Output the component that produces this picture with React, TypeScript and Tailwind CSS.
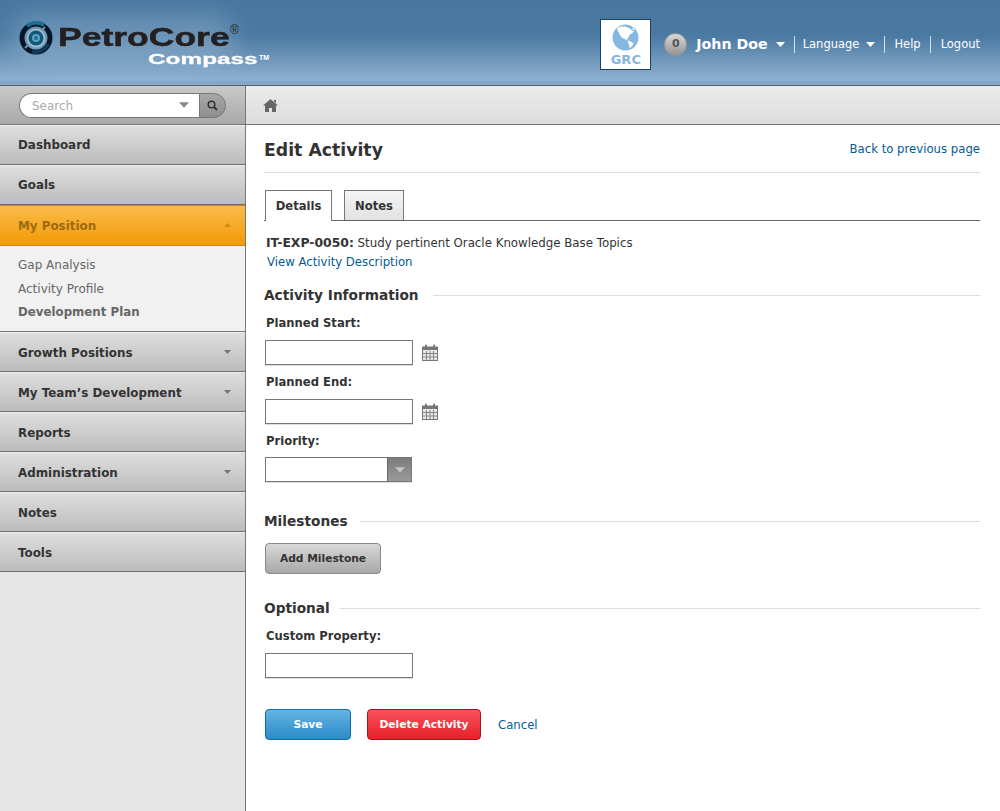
import React from "react";

const font = { fontFamily: '"DejaVu Sans", Verdana, sans-serif' };

const Caret = ({ up = false, className = "" }: { up?: boolean; className?: string }) => (
  <svg width="9" height="5" viewBox="0 0 9 5" className={className}>
    <path d={up ? "M0 5 L4.5 0 L9 5 Z" : "M0 0 L9 0 L4.5 5 Z"} fill="currentColor" />
  </svg>
);

const Logo = () => (
  <div className="relative w-[280px] h-[70px]">
    <div className="absolute left-[10px] top-[14px] w-[225px] h-[50px] rounded-full bg-[#a9c6dd] opacity-35 blur-[12px]" />
    <svg width="34" height="34" viewBox="0 0 34 34" className="absolute left-[19px] top-[21px]">
      <circle cx="17" cy="17" r="14" fill="none" stroke="#07162a" strokeWidth="5" />
      <path d="M8 5 A15 15 0 0 1 25 4" fill="none" stroke="#1c6f92" strokeWidth="4" />
      <path d="M29 23 A15 15 0 0 1 13 31" fill="none" stroke="#123a58" strokeWidth="4" />
      <path d="M26 6 L22 10 M6 27 L10 23" stroke="#6d93ae" strokeWidth="2" />
      <circle cx="17" cy="17" r="9.5" fill="#9fb9cb" />
      <circle cx="17" cy="17" r="7.5" fill="#0f5a7c" />
      <circle cx="17" cy="17" r="4" fill="#5fa3c0" />
      <circle cx="17" cy="17" r="2" fill="#1d6f90" />
    </svg>
    <span className="absolute left-[58px] top-[22px] text-[25px] leading-[30px] font-bold text-[#241f20] origin-left scale-x-[1.42] [-webkit-text-stroke:0.5px_#241f20] [font-family:'Liberation_Sans',sans-serif]">
      PetroCore
    </span>
    <span className="absolute left-[230px] top-[24px] text-[12px] leading-3 text-[#241f20] [font-family:'Liberation_Sans',sans-serif]">®</span>
    <span className="absolute left-[148px] top-[51px] text-[14.5px] leading-[16px] font-bold text-white origin-left scale-x-[1.68] [-webkit-text-stroke:0.3px_#fff] [font-family:'Liberation_Sans',sans-serif]">
      Compass
    </span>
    <span className="absolute left-[259px] top-[54px] text-[7px] leading-[8px] font-bold text-white [font-family:'Liberation_Sans',sans-serif]">TM</span>
  </div>
);

const Globe = () => (
  <svg width="27" height="27" viewBox="0 0 27 27">
    <circle cx="13.5" cy="13.5" r="13" fill="#84b8e2" />
    <path d="M5 4.5 C8 2.5 12 2 14 3 L17 4 C18 5 20 5.5 20 7 L22 7 L20 9.5 L18 10 L17 12.5 C16 13.5 15 14.5 15.5 16 L14 15.5 C11 14.5 9 13 8 11 C7 8.5 5.5 7 5 4.5 Z" fill="#fff" />
    <path d="M15.5 16.5 L18 17 L21.5 19.5 C21 21.5 19 23.5 17.5 24 L17 21 Z" fill="#fff" />
    <path d="M20 3 L23 5.5 L21 6.5 Z" fill="#fff" />
  </svg>
);

const Header = () => (
  <header className="h-[86px] flex items-start justify-between bg-[linear-gradient(#47769f_0%,#4a79a2_42%,#8fb1d0_95%,#7fa5c8_96%,#8aaccb_100%)] border-b border-[#5c6064]">
    <Logo />
    <div className="flex items-center pt-[19px] pr-[20px]">
      <div className="w-[51px] h-[51px] bg-white border border-[#1d3f60] flex flex-col items-center pt-[4px] mr-[13px]">
        <Globe />
        <span className="text-[13px] leading-[14px] font-bold text-[#84b8e2] mt-[2px]">GRC</span>
      </div>
      <div className="w-[23px] h-[23px] rounded-full bg-[linear-gradient(#d8d8d8,#959595)] border border-[#9a9a9a] text-[#555] text-[11px] font-bold flex items-center justify-center mr-[9px]">
        0
      </div>
      <span className="text-[14.2px] font-bold text-white mr-[8px]">John Doe</span>
      <Caret className="text-white mr-[9px]" />
      <span className="text-[11.5px] leading-[17px] text-white border-l border-[#d5e2ee] pl-[8px] pr-[9px] flex items-center gap-[7px]">
        Language
        <Caret className="text-white" />
      </span>
      <span className="text-[11.5px] leading-[17px] text-white border-l border-[#d5e2ee] pl-[9px] pr-[9px]">Help</span>
      <span className="text-[11.5px] leading-[17px] text-white border-l border-[#d5e2ee] pl-[10px]">Logout</span>
    </div>
  </header>
);

const SearchBar = () => (
  <div className="w-[246px] h-[38px] shrink-0 bg-[linear-gradient(#c9c9c9,#a9a9a9)] border-r border-[#777] flex items-center pl-[19px]">
    <div className="w-[180px] h-[25px] bg-white border border-[#777] border-r-0 rounded-l-full flex items-center justify-between pl-[12px] pr-[10px]">
      <span className="text-[12px] text-[#aaa] pt-px">Search</span>
      <Caret className="text-[#888] w-[10px] h-[6px]" />
    </div>
    <div className="w-[27px] h-[25px] bg-[linear-gradient(#a8a8a8,#8f8f8f)] border border-[#777] rounded-r-full flex items-center justify-center">
      <svg width="11" height="11" viewBox="0 0 11 11" fill="none" stroke="#333" strokeWidth="1.5">
        <circle cx="4.5" cy="4.5" r="3.3" />
        <path d="M7 7 L10 10" strokeWidth="2" />
      </svg>
    </div>
  </div>
);

const Breadcrumb = () => (
  <div className="flex-1 h-[38px] bg-[linear-gradient(#ececec,#dcdcdc)] flex items-center pl-[17px]">
    <svg width="15" height="13" viewBox="0 0 15 13">
      <path d="M7.5 0 L15 6.5 L13 6.5 L13 13 L9 13 L9 9 L6 9 L6 13 L2 13 L2 6.5 L0 6.5 Z M11 1 L13 1 L13 4 L11 2.5 Z" fill="#666" />
    </svg>
  </div>
);

const NavItem = ({ label, caret = false, lower = false }: { label: string; caret?: boolean; lower?: boolean }) => (
  <div className={`h-[40px] bg-[linear-gradient(#dedede,#bcbcbc)] border-b border-[#6f6f6f] border-t border-t-[#eeeeee] flex items-center justify-between pl-[18px] pr-[14px] ${lower ? "pt-[4px]" : "pt-[2px]"}`}>
    <span className="text-[11.9px] font-bold text-[#333]">{label}</span>
    {caret && <Caret className="text-[#777] w-[7px] h-[4px] -mt-[5px]" />}
  </div>
);

const Sidebar = () => (
  <aside className="w-[246px] shrink-0 bg-[#e6e6e6] border-r border-[#777]">
    <NavItem label="Dashboard" />
    <NavItem label="Goals" />
    <div className="h-[41px] bg-[linear-gradient(#fabb4b,#f29b05)] border-y border-[#c98a15] flex items-center justify-between pl-[18px] pr-[14px] pt-[2px]">
      <span className="text-[11.9px] font-bold text-[#9c6a10]">My Position</span>
      <Caret up className="text-[#c98a15] w-[7px] h-[4px] -mt-[4px]" />
    </div>
    <div className="h-[86px] bg-[#f1f1f1] border-b border-[#777] pl-[18px] pt-[8px] text-[12px] text-[#666] flex flex-col">
      <span className="leading-[23.5px]">Gap Analysis</span>
      <span className="leading-[23.5px]">Activity Profile</span>
      <span className="leading-[23.5px] font-bold text-[11.8px]">Development Plan</span>
    </div>
    <NavItem label="Growth Positions" caret lower />
    <NavItem label="My Team’s Development" caret lower />
    <NavItem label="Reports" lower />
    <NavItem label="Administration" caret lower />
    <NavItem label="Notes" lower />
    <NavItem label="Tools" lower />
  </aside>
);

const SectionTitle = ({ title, gap }: { title: string; gap: string }) => (
  <div className={`flex items-center ${gap}`}>
    <h2 className="text-[13.7px] leading-[20px] font-bold text-[#333]">{title}</h2>
    <div className="flex-1 h-px bg-[#dddddd]" />
  </div>
);

const FieldLabel = ({ children }: { children: React.ReactNode }) => (
  <label className="block text-[11.6px] leading-[16px] font-bold text-[#333] pl-[2px]">{children}</label>
);

const TextBox = () => <div className="ml-px w-[148px] h-[25px] bg-white border border-[#777] shadow-[0_1px_0_#ddd]" />;

const Calendar = () => (
  <svg width="16" height="17" viewBox="0 0 16 17" className="ml-[9px]">
    <rect x="0.5" y="3" width="15" height="13.5" fill="#e8e8e8" stroke="#777" />
    <rect x="0.5" y="3" width="15" height="3" fill="#777" />
    <path d="M4.5 7v9M8 7v9M11.5 7v9M1 9.5h14M1 13h14" stroke="#888" strokeWidth="1" />
    <rect x="3" y="0.5" width="2" height="4" rx="1" fill="#777" />
    <rect x="11" y="0.5" width="2" height="4" rx="1" fill="#777" />
  </svg>
);

const Content = () => (
  <main className="flex-1 pr-[20px] pl-[18px] text-[#333]">
    <div className="h-[48px] flex items-center justify-between border-b border-[#dddddd] pt-[5px]">
      <h1 className="text-[17.3px] font-bold text-[#333]">Edit Activity</h1>
      <a className="text-[11.7px] text-[#045a96] -mt-[2px]">Back to previous page</a>
    </div>

    <div className="mt-[17px] flex gap-[12px] border-b border-[#666] h-[31px] pl-px">
      <div className="w-[67px] h-[31px] bg-white border border-[#777] border-b-0 flex items-center justify-center text-[11.6px] font-bold relative z-10 pt-[2px]">
        Details
      </div>
      <div className="w-[60px] h-[30px] bg-[linear-gradient(#f4f4f4,#e2e2e2)] border border-[#777] border-b-0 flex items-center justify-center text-[11.6px] font-bold pt-[2px]">
        Notes
      </div>
    </div>

    <p className="mt-[13px] pl-[2px] text-[11.8px] leading-[18px]">
      <b className="text-[12.4px]">IT-EXP-0050:</b> Study pertinent Oracle Knowledge Base Topics
    </p>
    <a className="block pl-[3px] mt-px text-[11.7px] leading-[18px] text-[#045a96]">View Activity Description</a>

    <div className="mt-[14px]"><SectionTitle title="Activity Information" gap="gap-[14px]" /></div>
    <div className="mt-[10px]"><FieldLabel>Planned Start:</FieldLabel></div>
    <div className="mt-[9px] flex items-center"><TextBox /><Calendar /></div>
    <div className="mt-[9px]"><FieldLabel>Planned End:</FieldLabel></div>
    <div className="mt-[9px] flex items-center"><TextBox /><Calendar /></div>
    <div className="mt-[9px]"><FieldLabel>Priority:</FieldLabel></div>
    <div className="mt-[8px] ml-px w-[147px] h-[25px] flex bg-white border border-[#777] shadow-[0_1px_0_#ddd]">
      <div className="flex-1" />
      <div className="w-[24px] bg-[linear-gradient(#7c7c7c,#999999)] border-l border-[#666] flex items-center justify-center">
        <Caret className="text-[#c8c8c8] w-[10px] h-[6px]" />
      </div>
    </div>

    <div className="mt-[29px]"><SectionTitle title="Milestones" gap="gap-[12px]" /></div>
    <div className="mt-[12px] ml-px w-[116px] h-[31px] rounded-[4px] border border-[#888] bg-[linear-gradient(#d8d8d8,#a8a8a8)] flex items-center justify-center text-[10.7px] font-bold text-[#333] pt-[2px]">
      Add Milestone
    </div>
    <div className="mt-[24px]"><SectionTitle title="Optional" gap="gap-[10px]" /></div>
    <div className="mt-[10px]"><FieldLabel>Custom Property:</FieldLabel></div>
    <div className="mt-[9px]"><TextBox /></div>

    <div className="mt-[31px] ml-px flex items-center">
      <div className="w-[86px] h-[31px] rounded-[4px] border border-[#0b6ea8] bg-[linear-gradient(#64b3e4,#2b8bc8)] flex items-center justify-center text-[10.7px] font-bold text-white pt-[2px]">
        Save
      </div>
      <div className="ml-[16px] w-[114px] h-[31px] rounded-[4px] border border-[#b0101c] bg-[linear-gradient(#fb515a,#e4212a)] flex items-center justify-center text-[10.7px] font-bold text-white pt-[2px]">
        Delete Activity
      </div>
      <a className="ml-[17px] text-[11.7px] text-[#045a96] pt-[2px]">Cancel</a>
    </div>
  </main>
);

export default function App() {
  return (
    <div className="h-[811px] w-[1000px] bg-white flex flex-col overflow-hidden" style={font}>
      <Header />
      <div className="flex border-b border-[#777]">
        <SearchBar />
        <Breadcrumb />
      </div>
      <div className="flex flex-1">
        <Sidebar />
        <Content />
      </div>
    </div>
  );
}
